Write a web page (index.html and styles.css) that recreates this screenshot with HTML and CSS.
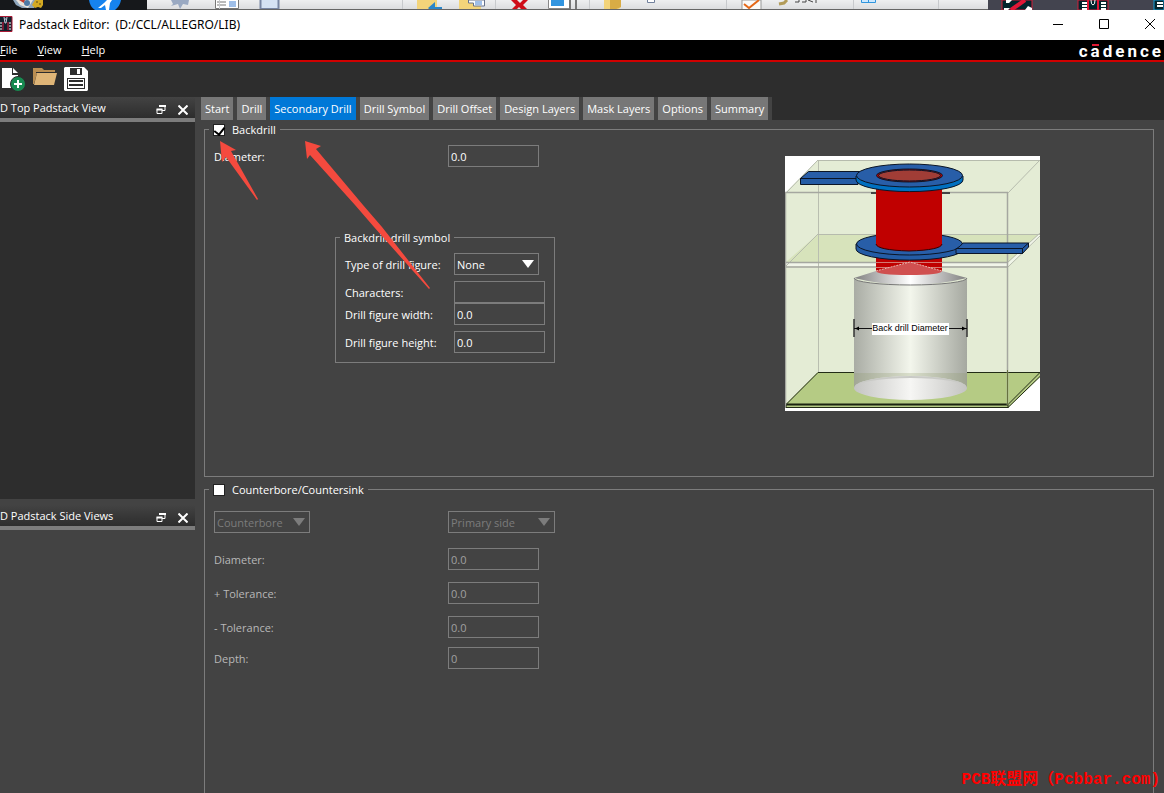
FILE: index.html
```html
<!DOCTYPE html>
<html lang="en">

<head>
    <meta charset="utf-8">
    <title>Padstack Editor</title>
    <link rel="stylesheet" href="styles.css">
</head>

<body>
    <!-- strip of the desktop behind the window -->
    <div class="desktop">
        <svg class="desk-left" width="147" height="10" viewBox="0 0 147 10">
            <rect width="147" height="10" fill="#16181b" />
            <path d="M13 0l3 5 6 3h12l4-8z" fill="#8fa6bd" />
            <path d="M16 0l4 5 8 3 5-8z" fill="#e8e3dc" />
            <path d="M19 0l5 3 1-3z" fill="#c33a2e" />
            <circle cx="27" cy="3" r="3" fill="#4d79a5" />
            <path d="M35 0l-3 5 3 3 3-1 3 1 2-3V0z" fill="#d5aa22" />
            <path d="M36 2h2M39 4h2" stroke="#5d4b18" />
            <path d="M89 0q1 7 6 10h20q5-4 6-10z" fill="#1683ef" />
            <path d="M98 8l6-5 3-3h5l-2 3-1 7h-3l-1-5-4 3z" fill="#fff" />
        </svg>
        <div class="ribbon">
            <svg width="842" height="10" viewBox="0 0 842 10">
                <path d="M24 0l2 4-2 2 7-2 2 5 3-5 5 1 1-5z" fill="#9aa9c2" />
                <path d="M68.500 0v8.500h23V0M70 2h9M70 5h9" fill="#fff" stroke="#777" />
                <path d="M82 2h7M82 4h7M82 6h7" stroke="#3e7ed2" />
                <path d="M113.500 0v9h18V0" fill="#d5e2f3" stroke="#7886a3" stroke-width="2" />
                <path d="M270 0h20v10h-20z" fill="#f3d47a" />
                <path d="M281 8l7-6v5h7v3h-12z" fill="#2b86c9" />
                <path d="M312 0h22v10h-22z" fill="#f3d47a" />
                <path d="M321.500 0v3h5v3h11V0z" fill="#fff" stroke="#66728c" />
                <path d="M328 2h7M328 4h7" stroke="#3e7ed2" />
                <path d="M364 10l5-5-5-5h6l3 3 3-3h5l-5 5 5 5h-6l-3-3-3 3z" fill="#cf0d18" />
                <path d="M401.500 0v8.500h22V0" fill="#fff" stroke="#888" />
                <path d="M404 0h13v6h-13z" fill="#3295e0" />
                <path d="M423 0v10M429 0v9" stroke="#777" stroke-width="2" />
                <path d="M457 0h17v7l-3 3h-14z" fill="#f3d47a" />
                <path d="M463 0h11v7l-7 3h-4z" fill="#d9ac45" />
                <path d="M500.500 0v2.500h7V0" fill="#fff" stroke="#71809c" />
                <path d="M595 0h19v10h-19z" fill="#fafafa" stroke="#999" />
                <path d="M597 4l5 4L612 0" fill="none" stroke="#e56818" stroke-width="2" />
                <path d="M632 4l5-1 3-3" fill="none" stroke="#b29b58" stroke-width="3" />
                <path d="M648 2h4V0M655 2h4V0M661 0l5 2M669 0v3" fill="none" stroke="#444" />
                <path d="M714.500 0v2.500h14V0M721.500 0v2" fill="#cce8ff" stroke="#2f95dd" />
                <path d="M72.500 0v9M255.500 0v9M348.500 0v9M442.500 0v9M579.500 0v9M706.500 0v9M791.500 0v9" stroke="#c8cacd" />
            </svg>
        </div>
        <svg class="desk-right" width="176" height="10" viewBox="0 0 176 10">
            <rect width="176" height="10" fill="#43444f" />
            <path d="M14 0h30v10H14z" fill="#03242c" stroke="#d21c38" />
            <path d="M23 10L37 0" stroke="#e01636" stroke-width="4" />
            <path d="M18 0h6l-3 3h-3zM37 10l3-4 4 2v2zM16 8h6l-2 2h-4z" fill="#fff" />
            <path d="M90 0h30v10H90z" fill="#03242c" stroke="#d21c38" />
            <path d="M100 0v10M110 0v10" stroke="#e01636" stroke-width="2" />
            <path d="M94 3h5M94 6h5M94 9h5M113 3h5M113 6h5M113 9h5" stroke="#fff" stroke-width="2" />
            <path d="M103 0q0 5 2 5t2-5" fill="none" stroke="#fff" />
            <path d="M166 0h10v10h-10z" fill="#03242c" stroke="#149cd5" />
            <path d="M169 3h6M169 6h6" stroke="#fff" stroke-width="2" />
        </svg>
    </div>

    <header class="titlebar">
        <svg width="13" height="16" viewBox="0 0 13 16">
            <path d="M-3 .5h15v15H-3z" fill="#10212c" stroke="#a91935" />
            <path d="M3 6v8M8 6v8" stroke="#e0173a" />
            <path d="M0 7h2M0 10h2M0 13h2M9 7h2M9 10h2M9 13h2" stroke="#fff" />
            <path d="M4 1l1 6h1l1-6M5 3h1" fill="none" stroke="#ccd" />
        </svg>
        <span class="title">Padstack Editor:&nbsp; (D:/CCL/ALLEGRO/LIB)</span>
        <div class="window-buttons">
            <button type="button" aria-label="Minimize"><svg width="10" height="10" viewBox="0 0 10 10"><path d="M0 5.500h10" stroke="#000" /></svg></button>
            <button type="button" aria-label="Maximize"><svg width="10" height="10" viewBox="0 0 10 10"><path d="M.5 .5h9v9h-9z" fill="none" stroke="#000" /></svg></button>
            <button type="button" aria-label="Close"><svg width="10" height="10" viewBox="0 0 10 10"><path d="M0 0l10 10M10 0L0 10" stroke="#000" /></svg></button>
        </div>
    </header>

    <nav class="menubar">
        <a href="#"><u>F</u>ile</a>
        <a href="#"><u>V</u>iew</a>
        <a href="#"><u>H</u>elp</a>
        <span class="logo">c<span class="bar">a</span>dence</span>
    </nav>

    <div class="toolbar">
        <button type="button" aria-label="New">
            <svg width="24" height="24" viewBox="0 0 24 24">
                <path d="M0 1h10v7h6v13H0z" fill="#fff" />
                <path d="M11 1l5 5h-5z" fill="#fff" />
                <circle cx="16" cy="17" r="7.500" fill="#178a50" stroke="#2d2d2d" />
                <path d="M16 13v8M12 17h8" stroke="#fff" stroke-width="2" />
            </svg>
        </button>
        <button type="button" aria-label="Open">
            <svg width="24" height="24" viewBox="0 0 24 24">
                <path d="M0 1h9l2 2h11v3H4L1 17H0z" fill="#b98d51" />
                <path d="M4 6h20l-3 12H1z" fill="#dfb577" />
                <path d="M3 5.500h20" stroke="#2d2d2d" />
            </svg>
        </button>
        <button type="button" aria-label="Save">
            <svg width="24" height="24" viewBox="0 0 24 24">
                <path d="M1 0h19l4 4v19l-1 1H1l-1-1V1z" fill="#fff" />
                <path d="M6 1h12v7H6z" fill="#2d2d2d" />
                <path d="M13 2h3v5h-3z" fill="#fff" />
                <path d="M3 11h18v11H3z" fill="#2d2d2d" />
                <path d="M4 12h16v9H4z" fill="#fff" />
                <path d="M5 14h14M5 18h14" stroke="#2d2d2d" stroke-width="2" />
            </svg>
        </button>
    </div>

    <div class="main">
        <aside class="docks">
            <section class="dock">
                <div class="dock-header">
                    <h2>D Top Padstack View</h2>
                    <button type="button" aria-label="Float top view"><svg width="10" height="10" viewBox="0 0 10 10"><path d="M3 1.500h6v4H6M1 4.500h5v4H1z" fill="none" stroke="#fff" /><path d="M3 1h7M.5 4.500h6" stroke="#fff" stroke-width="2" /></svg></button>
                    <button type="button" aria-label="Close top view"><svg width="10" height="10" viewBox="0 0 10 10"><path d="M.5 .5l9 9M9.500 .5l-9 9" stroke="#fff" stroke-width="2" /></svg></button>
                </div>
                <div class="view"></div>
            </section>
            <section class="dock">
                <div class="dock-header">
                    <h2>D Padstack Side Views</h2>
                    <button type="button" aria-label="Float side views"><svg width="10" height="10" viewBox="0 0 10 10"><path d="M3 1.500h6v4H6M1 4.500h5v4H1z" fill="none" stroke="#fff" /><path d="M3 1h7M.5 4.500h6" stroke="#fff" stroke-width="2" /></svg></button>
                    <button type="button" aria-label="Close side views"><svg width="10" height="10" viewBox="0 0 10 10"><path d="M.5 .5l9 9M9.500 .5l-9 9" stroke="#fff" stroke-width="2" /></svg></button>
                </div>
            </section>
        </aside>

        <main class="editor">
            <div class="tabs-row">
                <div class="tabs">
                    <button type="button">Start</button>
                    <button type="button">Drill</button>
                    <button type="button" class="active">Secondary Drill</button>
                    <button type="button">Drill Symbol</button>
                    <button type="button">Drill Offset</button>
                    <button type="button">Design Layers</button>
                    <button type="button">Mask Layers</button>
                    <button type="button">Options</button>
                    <button type="button">Summary</button>
                </div>
            </div>

            <div class="page">
                <fieldset class="group backdrill">
                    <legend><input type="checkbox" id="backdrill" checked><label for="backdrill">Backdrill</label></legend>
                    <div class="columns">
                        <div>
                            <div class="row">
                                <label for="bd-diameter">Diameter:</label>
                                <input type="text" id="bd-diameter" value="0.0">
                            </div>
                            <fieldset class="symbol">
                                <legend>Backdrill drill symbol</legend>
                                <div class="row">
                                    <label for="figure">Type of drill figure:</label>
                                    <span class="select small"><select id="figure"><option>None</option></select></span>
                                </div>
                                <div class="row">
                                    <label for="chars">Characters:</label>
                                    <input type="text" id="chars">
                                </div>
                                <div class="row tight">
                                    <label for="fig-width">Drill figure width:</label>
                                    <input type="text" id="fig-width" value="0.0">
                                </div>
                                <div class="row">
                                    <label for="fig-height">Drill figure height:</label>
                                    <input type="text" id="fig-height" value="0.0">
                                </div>
                            </fieldset>
                        </div>

                        <svg class="diagram" width="255" height="255" viewBox="0 0 255 255">
                            <defs>
                                <linearGradient id="body">
                                    <stop offset="0" stop-color="#a9aca4" />
                                    <stop offset=".5" stop-color="#f3f6ec" />
                                    <stop offset="1" stop-color="#a5a8a0" />
                                </linearGradient>
                                <linearGradient id="cone">
                                    <stop offset="0" stop-color="#808080" />
                                    <stop offset=".5" stop-color="#fff" />
                                    <stop offset="1" stop-color="#808080" />
                                </linearGradient>
                                <linearGradient id="base">
                                    <stop offset="0" stop-color="#c4c4c2" />
                                    <stop offset=".5" stop-color="#f6f6f4" />
                                    <stop offset="1" stop-color="#c4c4c2" />
                                </linearGradient>
                            </defs>
                            <rect width="255" height="255" fill="#fff" />
                            <path d="M0 37L33 4h222v212l-32 32H0z" fill="#e4ecd5" />
                            <path d="M33 78h222l-32 28H1z" fill="#d7e3bb" />
                            <path d="M0 107h223l32-30v4l-32 29H0z" fill="#f1f5e9" />
                            <!-- board at the bottom -->
                            <path d="M33 216h222v5l-32 31H1v-4z" fill="#b5cb84" />
                            <path d="M1 248.500L33 216.500h222l-32 32zM1 251.500h222l32-31M1 248v4M223 248v4" fill="none" stroke="#222b16" />
                            <path d="M1 248.500h222" stroke="#1b2310" stroke-width="2" />
                            <g fill="none" stroke="#a5a7a0">
                                <path d="M33.500 4v212" stroke="#b9beb0" />
                                <path d="M33 4.500h222M1 37L33 4M223 37l32-33M33 78.500h222M1 110l32-32M223 106l32-29M223 111l32-31" stroke="#b6bbad" />
                                <path d="M0 36.500h223M0 106.500h223M0 111h223M.5 37v212M222.500 37v212" stroke-width="1.500" />
                            </g>
                            <!-- plated hole -->
                            <path d="M91 98h66v18q-33 8-66 0z" fill="#c00000" />
                            <path d="M91 106.500h66M91 111.500h66" stroke="#d47a72" />
                            <g stroke="#0b1526" stroke-linejoin="round">
                                <path d="M71 88v5a53 11 0 0 0 107 0v-5z" fill="#245ca5" />
                                <ellipse cx="124.500" cy="88" rx="53" ry="11" fill="#285ea8" />
                                <path d="M178 87h65.500l-6 6H171q5-3 7-6z" fill="#285ea8" />
                                <path d="M171 92.500h66.500v5H171zM237.500 92.500l6-5.500v4l-6 6.500z" fill="#245ca5" />
                            </g>
                            <path d="M86 37h79" stroke="#444" stroke-width="2" />
                            <path d="M91 30h66v58q0 6-33 7-33-1-33-7z" fill="#c00000" />
                            <path d="M91 88q1 6 33 7 32-1 33-7" fill="none" stroke="#300" />
                            <g stroke="#0b1526" stroke-linejoin="round">
                                <path d="M15.500 22.500l8-7H77l-5 7z" fill="#285ea8" />
                                <path d="M15.500 22.500H73v6H15.500z" fill="#245ca5" />
                                <path d="M71 20v4a53 11.500 0 0 0 107 0v-4z" fill="#0070c0" />
                                <ellipse cx="124.500" cy="19.500" rx="53" ry="11.500" fill="#285ea8" />
                                <ellipse cx="124.500" cy="19.500" rx="33" ry="6.500" fill="#c00000" />
                                <ellipse cx="124.500" cy="19.500" rx="31" ry="5.500" fill="#a13d36" />
                            </g>
                            <!-- back drill -->
                            <path d="M69 122l22-7q34 6 66 0l25 7q-57 14-113 0z" fill="url(#cone)" />
                            <path d="M91 115l34-9 32 9q-1 4-33 4t-33-4z" fill="#d05050" />
                            <path d="M91 115l34-9 32 9" fill="none" stroke="#e9b7b0" stroke-dasharray="2 1" />
                            <path d="M69 122a56.500 7 0 0 0 113 0v110H69z" fill="url(#body)" />
                            <path d="M69 122a56.500 7 0 0 0 113 0" fill="none" stroke="#777" />
                            <path d="M69 217h113v15H69z" fill="#8b9968" opacity=".25" />
                            <ellipse cx="125.500" cy="232" rx="56.500" ry="12" fill="url(#base)" />
                            <path d="M69 232a56.500 12 0 0 1 113 0a56.500 10 0 0 0-113 0" fill="#c9cac6" />
                            <path d="M222.500 214v35" stroke="#66713f" />
                            <!-- dimension line -->
                            <path d="M69 163v18M182 163v18" stroke="#333" stroke-width="1.500" />
                            <path d="M69 172.500h18M163 172.500h19" stroke="#111" />
                            <path d="M70 172.500l4-2v4zM181 172.500l-4-2v4z" />
                            <path d="M87 167h77v12H87z" fill="#fff" />
                            <text x="125" y="175" text-anchor="middle" class="dim">Back drill Diameter</text>
                        </svg>
                    </div>
                </fieldset>

                <fieldset class="group counter">
                    <legend><input type="checkbox" id="counter"><label for="counter">Counterbore/Countersink</label></legend>
                    <div class="row kinds">
                        <span class="select medium"><select aria-label="Kind" disabled><option>Counterbore</option></select></span>
                        <span class="select"><select aria-label="Side" disabled><option>Primary side</option></select></span>
                    </div>
                    <div class="row">
                        <label for="cb-diameter">Diameter:</label>
                        <input type="text" id="cb-diameter" value="0.0" disabled>
                    </div>
                    <div class="row">
                        <label for="cb-plus">+ Tolerance:</label>
                        <input type="text" id="cb-plus" value="0.0" disabled>
                    </div>
                    <div class="row">
                        <label for="cb-minus">- Tolerance:</label>
                        <input type="text" id="cb-minus" value="0.0" disabled>
                    </div>
                    <div class="row last">
                        <label for="cb-depth">Depth:</label>
                        <input type="text" id="cb-depth" value="0" disabled>
                    </div>
                </fieldset>
            </div>
        </main>
    </div>

    <svg class="arrows" width="240" height="160" viewBox="200 135 240 160">
        <path d="M220 141l16 9-5 1 27 48-1 1-31-43-4 5z" fill="#f44a3e" />
        <path d="M305 141l16 5-5 3 47 56 19 22 48 61-1 1-55-62-19-22-45-50-3 4z" fill="#f44a3e" />
    </svg>
    <div class="watermark">PCB联盟网（Pcbbar.com)</div>
</body>

</html>
```

FILE: styles.css
```css
* {
    box-sizing: border-box;
}

body {
    margin: 0;
    height: 100vh;
    display: flex;
    flex-direction: column;
    position: relative;
    overflow: hidden;
    background: #434343;
    color: #fff;
    font-family: "Open Sans", "Noto Sans", sans-serif;
    font-size: 11px;
    line-height: 17px;
}

svg {
    display: block;
    flex: none;
}

button,
input,
select {
    font: inherit;
    color: inherit;
}

button {
    padding: 0;
    border: none;
    background: none;
}

.desktop {
    display: flex;
    height: 10px;
    flex: none;
}

.ribbon {
    flex: 1;
    overflow: hidden;
    background: linear-gradient(#eeeff0, #dcdddf);
    border-bottom: 1px solid #666;
}

.titlebar {
    display: flex;
    align-items: center;
    flex: none;
    height: 30px;
    padding-bottom: 2px;
    background: #fff;
    color: #000;
    font-family: "Noto Sans", "Open Sans", sans-serif;
    font-size: 12px;
}

.title {
    flex: 1;
    padding-left: 6px;
}

.window-buttons {
    display: flex;
}

.window-buttons button {
    width: 46px;
    height: 28px;
    display: flex;
    align-items: center;
    justify-content: center;
}

.window-buttons button:last-child {
    width: 37px;
    padding-left: 9px;
}

.menubar {
    display: flex;
    align-items: center;
    gap: 20px;
    flex: none;
    height: 22px;
    background: #000;
    border-bottom: 2px solid #d00000;
}

.menubar a {
    padding-bottom: 2px;
    color: #fff;
    text-decoration: none;
}

.logo {
    margin-left: auto;
    padding-top: 3px;
    font-family: Roboto, sans-serif;
    font-size: 17px;
    font-weight: bold;
    letter-spacing: 3px;
}

.bar {
    position: relative;
}

.bar::before {
    content: "";
    position: absolute;
    left: 1px;
    top: 3px;
    width: 7px;
    height: 2px;
    background: #e01a34;
}

.toolbar {
    display: flex;
    align-items: flex-start;
    gap: 7px;
    flex: none;
    height: 35px;
    padding: 5px 2px;
    background: #2d2d2d;
}

.main {
    display: flex;
    flex: 1;
    min-height: 0;
}

.docks {
    width: 195px;
    flex: none;
    display: flex;
    flex-direction: column;
    gap: 6px;
}

.dock-header {
    display: flex;
    align-items: center;
    gap: 12px;
    height: 25px;
    padding-right: 7px;
    background: linear-gradient(#434343, #2d2d2d);
    border-bottom: 4px solid #7c7c7c;
}

.dock-header button {
    padding-top: 5px;
}

.dock-header h2 {
    flex: 1;
    margin: 0;
    font-size: 11px;
    font-weight: normal;
}

.view {
    height: 377px;
    background: #2d2d2d;
}

.editor {
    flex: 1;
    display: flex;
    flex-direction: column;
    min-width: 0;
}

.tabs-row {
    background: #2d2d2d;
}

.tabs {
    display: flex;
    gap: 4px;
    width: max-content;
    padding: 0 4px 0 6px;
    background: #434343;
}

.tabs button {
    height: 23px;
    padding: 0 4px;
    background: #777;
    white-space: nowrap;
}

.tabs .active {
    background: #0078d7;
}

.page {
    flex: 1;
    display: flex;
    flex-direction: column;
    gap: 4px;
    padding: 1px 10px 0 9px;
}

fieldset {
    min-width: 0;
    margin: 0;
    padding: 7px 9px;
    border: 1px solid #7c7c7c;
}

legend {
    display: flex;
    align-items: center;
    gap: 7px;
    padding: 0 4px;
}

.group > legend {
    margin-left: -5px;
}

.backdrill {
    height: 356px;
}

.counter {
    flex: 1;
    padding-top: 13px;
    border-bottom: none;
}

input[type="checkbox"] {
    appearance: none;
    width: 12px;
    height: 12px;
    margin: 0;
    background: #fff;
    border: 1px solid #222;
    display: flex;
    justify-content: center;
}

input[type="checkbox"]:checked::after {
    content: "";
    width: 5px;
    height: 8px;
    border: solid #000;
    border-width: 0 2px 2px 0;
    transform: rotate(38deg);
}

.columns {
    display: grid;
    grid-template-columns: 466px 1fr;
}

.diagram {
    justify-self: center;
    margin-top: 11px;
}

.dim {
    font-family: "Liberation Sans", Arial, sans-serif;
    font-size: 9px;
}

.row {
    display: grid;
    grid-template-columns: 234px 107px;
    align-items: center;
    margin-bottom: 12px;
}

.kinds {
    margin-bottom: 15px;
}

input[type="text"] {
    width: 91px;
    height: 22px;
    padding: 1px 2px 0;
    background: none;
    border: 1px solid #7c7c7c;
    border-radius: 0;
}

.select {
    position: relative;
    display: block;
}

.select select {
    appearance: none;
    width: 100%;
    height: 22px;
    padding: 1px 2px 0;
    background: none;
    border: 1px solid #7c7c7c;
    border-radius: 0;
    display: block;
}

.select::after {
    content: "";
    position: absolute;
    right: 5px;
    top: 7px;
    border: 6px solid transparent;
    border-top: 8px solid #fff;
    border-bottom: none;
    pointer-events: none;
}

.small {
    width: 85px;
}

.medium {
    width: 96px;
}

.symbol {
    width: 220px;
    margin: 62px 0 0 121px;
    padding: 7px 9px 3px;
}

.symbol legend {
    margin-left: -5px;
}

.symbol .row {
    grid-template-columns: 109px 91px;
    margin-bottom: 6px;
}

.symbol .row:has(+ .tight) {
    margin-bottom: 0;
}

.counter .row {
    color: #b8b8b8;
}

.counter .row:has(+ .last) {
    margin-bottom: 9px;
}

.counter input[type="text"] {
    color: #a0a0a0;
}

.counter select {
    color: #7c7c7c;
    opacity: 1;
}

.counter .select::after {
    border-top-color: #7c7c7c;
}

.arrows {
    position: absolute;
    left: 200px;
    top: 135px;
    pointer-events: none;
}

.watermark {
    position: absolute;
    right: 4px;
    bottom: 2px;
    color: #f00;
    font-family: "Liberation Mono", "Noto Sans CJK SC", monospace;
    font-size: 16px;
    font-weight: bold;
    line-height: 22px;
}
```
